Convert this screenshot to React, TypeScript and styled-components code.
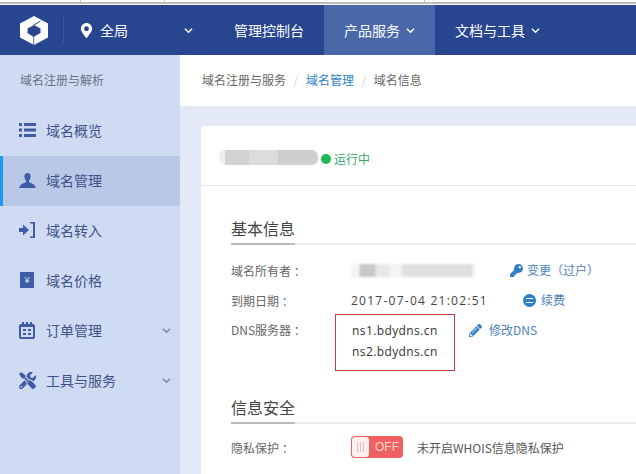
import React from "react";
import styled, { createGlobalStyle } from "styled-components";
import { FaTools, FaKey, FaPencilAlt, FaMapMarkerAlt } from "react-icons/fa";

const Global = createGlobalStyle`
  html, body { margin: 0; padding: 0; background: #e4e9f7; }
  body { font-family: "Noto Sans CJK SC", "Liberation Sans", sans-serif; }
  * { box-sizing: border-box; }
`;

const Page = styled.div`
  width: 636px; height: 474px; overflow: hidden; display: flex; flex-direction: column;
`;
const TopStrip = styled.div`
  height: 5px; background: #fbfbf9; flex: none; display: flex; align-items: flex-start;
  border-bottom: 1px solid #fbfbf9;
  box-shadow: inset 0 -2px 0 #bdbdbd;
`;
const StripTab = styled.span<{ $w: number }>`
  width: ${(p) => p.$w}px; height: 3px; border-right: 1px solid #c4c4c4;
`;
const Header = styled.header`
  height: 50px; flex: none; background: #27468f; display: flex; align-items: stretch; color: #fff; font-size: 14px;
`;
const LogoBox = styled.div`
  width: 64px; display: flex; align-items: center; padding-left: 20px;
  position: relative;
  &::after { content: ""; position: absolute; right: 0; top: 11px; bottom: 11px; width: 1px; background: #3a5698; }
`;
const Region = styled.div`
  width: 150px; display: flex; align-items: center; padding-left: 15px; gap: 6px;
  svg.pin { font-size: 15px; }
`;
const RegionChevron = styled.span`
  margin-left: auto; margin-right: 21px; display: flex;
`;
const NavItem = styled.div<{ $active?: boolean }>`
  display: flex; align-items: center; gap: 6px; padding: 0 20px; height: 100%;
  background: ${(p) => (p.$active ? "#4a68a8" : "transparent")};
`;
const Body = styled.div`
  flex: 1; display: flex; min-height: 0;
`;
const Sidebar = styled.aside`
  width: 180px; flex: none; background: #cfdbf3;
`;
const SideTitle = styled.div`
  height: 51px; padding: 0 0 2px 20px; font-size: 12px; line-height: 49px; color: #6a7280;
`;
const SideItem = styled.div<{ $active?: boolean }>`
  height: 50px; display: flex; align-items: center; position: relative;
  padding: 0 8px 2px 19px; font-size: 14px; color: #3f5187;
  background: ${(p) => (p.$active ? "#b8c8e6" : "transparent")};
  ${(p) => p.$active && `&::before { content: ""; position: absolute; left: 0; top: 0; bottom: 0; width: 3px; background: #1e9af0; }`}
`;
const SideIcon = styled.span`
  width: 27px; flex: none; display: flex; align-items: center; color: #3f5ca6; font-size: 17px;
`;
const YenIcon = styled.span`
  width: 14px; height: 16px; margin-left: 1px; background: #3f5ca6; color: #dbe4f6; font-size: 9px; line-height: 16px; text-align: center;
  font-family: "Liberation Sans", sans-serif;
`;
const SideChevron = styled.span`
  margin-left: auto; margin-right: 1px; display: flex; color: #6b83bb;
`;
const Main = styled.main`
  flex: 1; min-width: 0; display: flex; flex-direction: column;
`;
const Breadcrumb = styled.nav`
  height: 51px; flex: none; background: #fff; display: flex; align-items: center; padding: 0 0 3px 22px; font-size: 12px; color: #666;
`;
const Sep = styled.span`
  color: #d4d4d4; margin: 0 7.6px;
`;
const Crumb = styled.a`
  color: #2f7fc8;
`;
const Card = styled.section`
  margin: 20px 0 0 21px; background: #fff; flex: 1; border-radius: 3px 0 0 0;
`;
const CardHead = styled.div`
  height: 60px; border-bottom: 1px solid #e4e6ec; display: flex; align-items: center; padding: 6px 0 0 18px; gap: 3px;
`;
const Blurred = styled.div`
  width: 99px; height: 15px; margin-top: -3px; border-radius: 6px; filter: blur(0.7px);
  background-image: linear-gradient(90deg, #efefef 0 6px, #d2d2d2 6px 30%, #dcdcdc 30% 60%, #cfcfcf 60%);
`;
const Dot = styled.span`
  width: 10px; height: 10px; border-radius: 50%; background: #1db954;
`;
const Status = styled.span`
  font-size: 12px; color: #3aa76d;
`;
const CardBody = styled.div`
  padding-left: 30px;
`;
const SectionTitle = styled.div<{ $top: number }>`
  margin-top: ${(p) => p.$top}px; height: 30px; border-bottom: 2px solid #eee; font-size: 16px; line-height: 26px; color: #444;
`;
const TitleText = styled.span`
  display: inline-block; height: 30px; border-bottom: 2px solid #bbb;
`;
const Rows = styled.div<{ $top: number }>`
  padding-top: ${(p) => p.$top}px;
`;
const Row = styled.div`
  display: flex; align-items: center; min-height: 30px; font-size: 12px; color: #555;
`;
const TopRow = styled(Row)`
  align-items: flex-start;
  line-height: 30px;
`;
const Label = styled.span`
  width: 120px; flex: none; color: #666; white-space: pre;
`;
const Value = styled.span<{ $spacing: number }>`
  color: #444; letter-spacing: ${(p) => p.$spacing}px; font-size: 12px; font-family: "Open Sans", "Noto Sans CJK SC", sans-serif;
`;
const OwnerBlur = styled.div`
  width: 125px; height: 22px; filter: blur(0.8px);
  background: linear-gradient(90deg, #f4f4f4 0 8px, #c8c8c8 9px 24px, #e8e8e8 25px 38px, #f4f4f4 39px 50px, #e0e0e0 52px 120px, #fff 125px);
  background-size: 100% 13px; background-position: 0 5px; background-repeat: no-repeat;
`;
const Action = styled.a<{ $gap: number; $iconGap: number }>`
  margin-left: ${(p) => p.$gap}px; color: #4d7fb8; display: inline-flex; align-items: center; gap: ${(p) => p.$iconGap}px; line-height: 30px;
  svg { color: #2f7fc8; font-size: 13px; }
`;
const DnsBox = styled.div`
  margin: -1px 0 0 -16px; width: 120px; height: 57px; border: 1px solid #c83c40; padding: 5px 0 0 16px; line-height: 21px;
  flex: none;
`;
const DnsLine = styled(Value)`
  display: block; color: #333;
`;
const RenewIcon = styled.span`
  width: 13px; height: 13px; border-radius: 50%; background: #2f7fc8; position: relative;
  &::after { content: ""; position: absolute; left: 3px; right: 3px; top: 4px; height: 3px; border-top: 1px solid #fff; border-bottom: 1px solid #fff; box-sizing: content-box; }
`;
const Switch = styled.div`
  width: 52px; height: 22px; border-radius: 4px; background: #f06060; display: flex; align-items: center; padding: 1px; color: #fbd3d3; font-size: 12px;
  font-family: "Liberation Sans", sans-serif;
`;
const Knob = styled.span`
  width: 17px; height: 20px; background: #fdf0f2; border-radius: 3px; display: flex; align-items: center; justify-content: center; gap: 2px;
  margin-right: 6px;
`;
const KnobLine = styled.i`
  width: 1px; height: 10px; background: #f3b8c0;
`;
const SwitchHint = styled.span`
  margin-left: 14px; color: #555;
`;

const Chevron = ({ size = 9, w = 1.6 }: { size?: number; w?: number }) => (
  <svg width={size} height={size} viewBox="0 0 10 10" fill="none" stroke="currentColor" strokeWidth={w}>
    <path d="M1 3l4 4 4-4" />
  </svg>
);
const Logo = () => (
  <svg width="28" height="29" viewBox="0 0 28 29" fill="#fff">
    <path fillRule="evenodd" d="M14 0L28 7.5V21.5L14 29L0 21.5V7.5ZM14 9L7.5 12.5V17L13.5 21L20.5 17V12.5Z" />
    <path d="M14 9L20.5 5" stroke="#27468f" strokeWidth="1" />
    <path d="M13.7 21v8" stroke="#27468f" strokeWidth="0.8" />
  </svg>
);
const ListIcon = () => (
  <svg width="17" height="14" viewBox="0 0 17 14" fill="currentColor">
    <path d="M0 0h3v3H0zM5 0h12v3H5zM0 5.5h3v3H0zM5 5.5h12v3H5zM0 11h3v3H0zM5 11h12v3H5z" />
  </svg>
);
const UserIcon = () => (
  <svg width="17" height="15" viewBox="0 0 17 15" fill="currentColor">
    <path d="M8.5 0C10.6 0 11.6 1.6 11.6 3.6C11.6 5.4 10.9 6.8 10 7.8V9.2C12.5 10.2 16 10.8 16.8 15H.2C1 10.8 4.5 10.2 7 9.2V7.8C6.1 6.8 5.4 5.4 5.4 3.6C5.4 1.6 6.4 0 8.5 0Z" />
  </svg>
);
const LoginIcon = () => (
  <svg width="16" height="16" viewBox="0 0 16 16" fill="currentColor">
    <path d="M0 6h4V2.5L10 8 4 13.5V10H0Z" />
    <path d="M11 0h5v16h-5v-1.5h3V1.5h-3Z" />
  </svg>
);
const CalendarIcon = () => (
  <svg width="16" height="17" viewBox="0 0 16 17" fill="currentColor">
    <path fillRule="evenodd" d="M2 2h12a2 2 0 0 1 2 2v11a2 2 0 0 1-2 2H2a2 2 0 0 1-2-2V4a2 2 0 0 1 2-2ZM2 5v10h12V5Z" />
    <path d="M3 0h2v3H3zM7 0h2v3H7zM11 0h2v3h-2zM4 7h3v2H4zM9 7h3v2H9zM4 11h3v2H4zM9 11h3v2H9z" />
  </svg>
);

export default function App() {
  return (
    <Page>
      <Global />
      <TopStrip>
        <StripTab $w={81} /><StripTab $w={84} /><StripTab $w={260} />
      </TopStrip>
      <Header>
        <LogoBox><Logo /></LogoBox>
        <Region>
          <FaMapMarkerAlt className="pin" />
          <span>全局</span>
          <RegionChevron><Chevron /></RegionChevron>
        </Region>
        <NavItem>管理控制台</NavItem>
        <NavItem $active>产品服务 <Chevron /></NavItem>
        <NavItem>文档与工具 <Chevron /></NavItem>
      </Header>
      <Body>
        <Sidebar>
          <SideTitle>域名注册与解析</SideTitle>
          <SideItem><SideIcon><ListIcon /></SideIcon>域名概览</SideItem>
          <SideItem $active><SideIcon><UserIcon /></SideIcon>域名管理</SideItem>
          <SideItem><SideIcon><LoginIcon /></SideIcon>域名转入</SideItem>
          <SideItem><SideIcon><YenIcon>¥</YenIcon></SideIcon>域名价格</SideItem>
          <SideItem><SideIcon><CalendarIcon /></SideIcon>订单管理<SideChevron><Chevron /></SideChevron></SideItem>
          <SideItem><SideIcon><FaTools /></SideIcon>工具与服务<SideChevron><Chevron /></SideChevron></SideItem>
        </Sidebar>
        <Main>
          <Breadcrumb>
            域名注册与服务<Sep>/</Sep><Crumb>域名管理</Crumb><Sep>/</Sep>域名信息
          </Breadcrumb>
          <Card>
            <CardHead>
              <Blurred />
              <Dot />
              <Status>运行中</Status>
            </CardHead>
            <CardBody>
              <SectionTitle $top={29}><TitleText>基本信息</TitleText></SectionTitle>
              <Rows $top={10}>
                <Row>
                  <Label>域名所有者 ：</Label>
                  <OwnerBlur />
                  <Action $gap={34} $iconGap={4}><FaKey />变更（过户）</Action>
                </Row>
                <Row>
                  <Label>到期日期 ：</Label>
                  <Value $spacing={1.25}>2017-07-04 21:02:51</Value>
                  <Action $gap={35} $iconGap={5}><RenewIcon />续费</Action>
                </Row>
                <TopRow>
                  <Label>DNS服务器 ：</Label>
                  <DnsBox>
                    <DnsLine $spacing={0.4}>ns1.bdydns.cn</DnsLine>
                    <DnsLine $spacing={0.4}>ns2.bdydns.cn</DnsLine>
                  </DnsBox>
                  <Action $gap={14} $iconGap={7}><FaPencilAlt />修改DNS</Action>
                </TopRow>
              </Rows>
              <SectionTitle $top={23}><TitleText>信息安全</TitleText></SectionTitle>
              <Rows $top={8}>
                <Row>
                  <Label>隐私保护 ：</Label>
                  <Switch>
                    <Knob><KnobLine /><KnobLine /><KnobLine /></Knob>OFF
                  </Switch>
                  <SwitchHint>未开启WHOIS信息隐私保护</SwitchHint>
                </Row>
              </Rows>
            </CardBody>
          </Card>
        </Main>
      </Body>
    </Page>
  );
}
